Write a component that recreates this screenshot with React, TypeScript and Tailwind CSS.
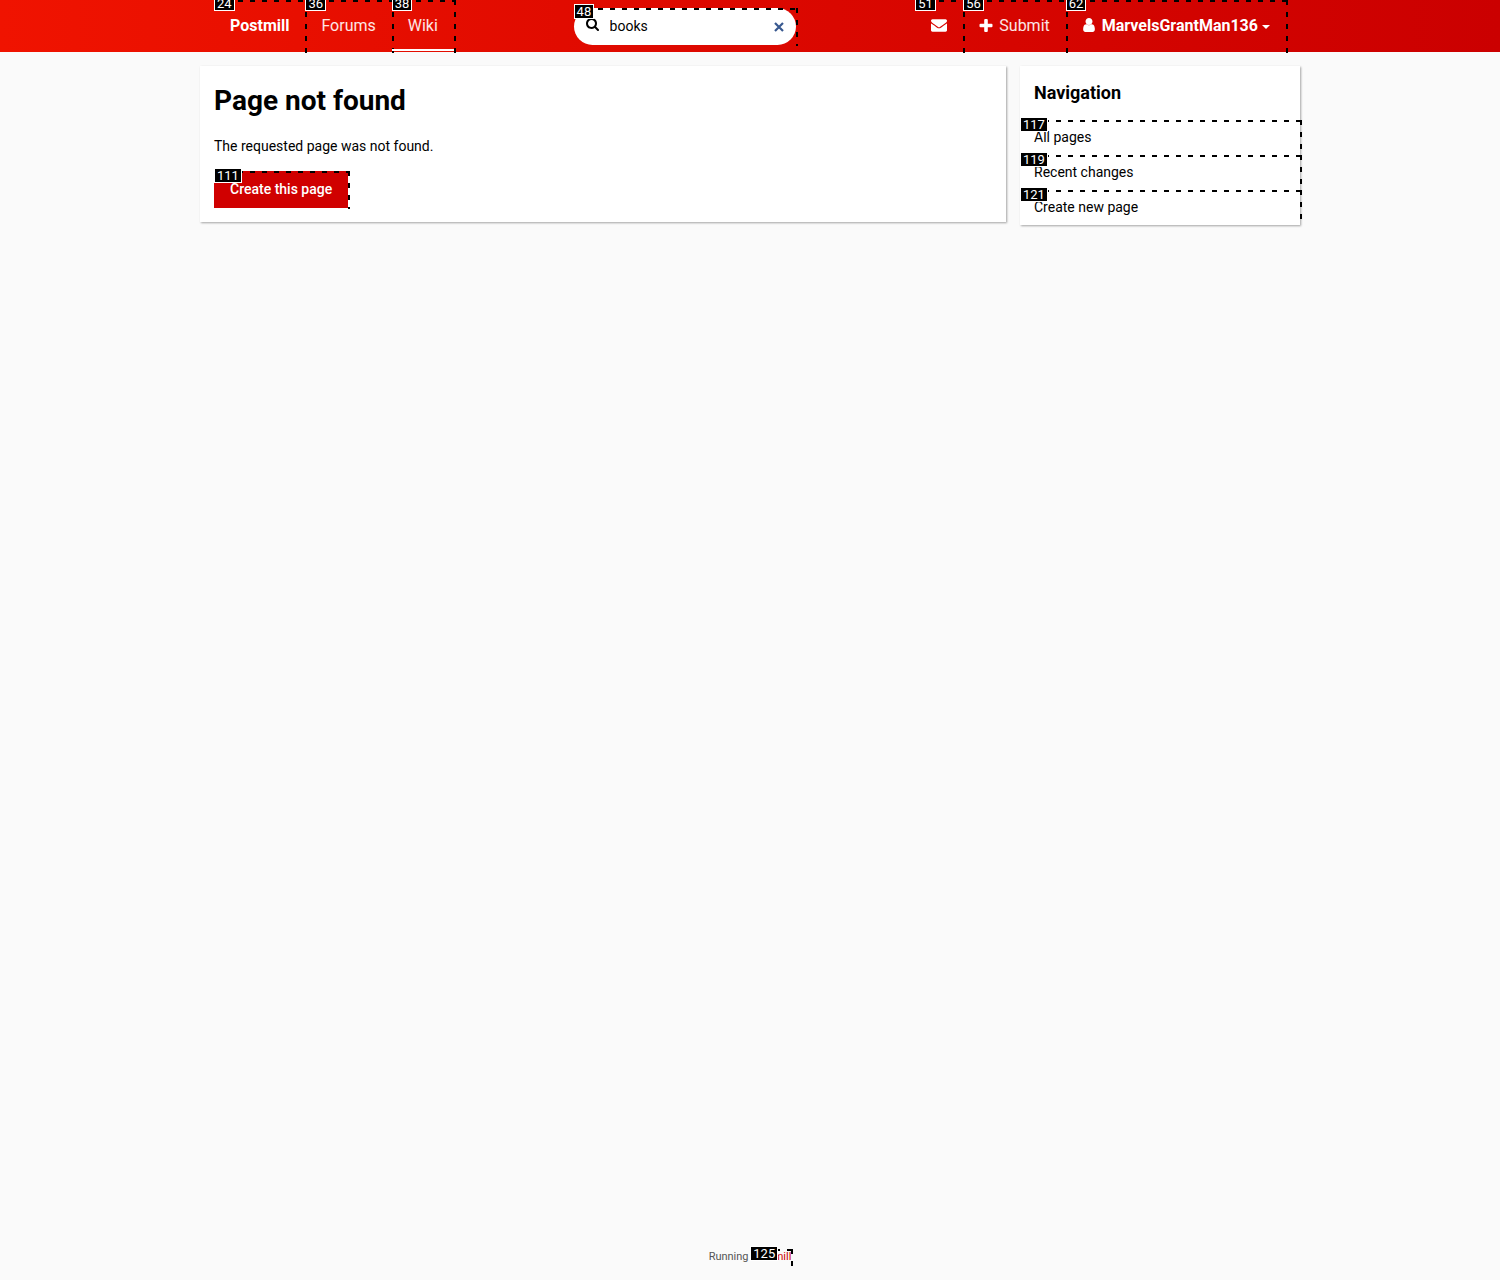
import React, { useState } from "react";

const rowDash = "bg-[repeating-linear-gradient(to_right,#000_0_5px,transparent_5px_12px)]";
const colDash = "bg-[repeating-linear-gradient(to_bottom,#000_0_5px,transparent_5px_12px)]";

function Mark({ n, tag }: { n: string; tag: string }) {
  return (
    <span aria-hidden="true" className="pointer-events-none absolute inset-0">
      <span className={`absolute left-0 -right-0.5 top-0 h-0.5 ${rowDash}`} />
      <span className={`absolute -right-0.5 top-0 -bottom-px w-0.5 ${colDash}`} />
      <span className={`absolute bg-black px-0.5 text-[13px]/[13px] font-normal text-white outline outline-1 outline-white ${tag}`}>{n}</span>
    </span>
  );
}

function HeaderLink({ n, className = "", children, label }: { n: string; className?: string; children: React.ReactNode; label?: string }) {
  return (
    <a href="#" aria-label={label} className={`relative flex h-[52px] items-center px-4 text-base ${className}`}>
      {children}
      <Mark n={n} tag="left-px -top-[3px]" />
    </a>
  );
}

const navItems = [
  { n: "117", label: "All pages" },
  { n: "119", label: "Recent changes" },
  { n: "121", label: "Create new page" },
];

export default function App() {
  const [query, setQuery] = useState("books");
  return (
    <div className="flex min-h-screen flex-col bg-[#fafafa] font-['Roboto',sans-serif] text-sm text-black">
      <header className="bg-linear-to-r from-[#f01300] via-[#dc0800] to-[#cb0000] text-white">
        <div className="mx-auto flex max-w-[1072px] items-center justify-between">
          <nav className="flex">
            <HeaderLink n="24" className="font-bold">Postmill</HeaderLink>
            <HeaderLink n="36" className="text-white/90">Forums</HeaderLink>
            <HeaderLink n="38" className="text-white/90 after:absolute after:inset-x-0 after:bottom-px after:h-0.5 after:bg-white">Wiki</HeaderLink>
          </nav>
          <form role="search" className="relative mt-px flex h-[37px] w-[222px] items-center rounded-full bg-white px-3 text-black" onSubmit={(e) => e.preventDefault()}>
            <svg viewBox="0 0 1664 1664" className="mb-1 size-[13px] shrink-0" fill="currentColor" aria-hidden="true">
              <path d="M1152 704q0-185-131.500-316.500T704 256 387.500 387.500 256 704t131.500 316.500T704 1152t316.500-131.500T1152 704zm512 832q0 52-38 90t-90 38q-54 0-90-38l-343-342q-179 124-399 124-143 0-273.500-55.500t-225-150-150-225T0 704t55.500-273.500 150-225 225-150T704 0t273.500 55.500 225 150 150 225T1408 704q0 220-124 399l343 343q37 37 37 90z" />
            </svg>
            <input type="search" aria-label="Search" value={query} onChange={(e) => setQuery(e.target.value)} className="ml-[11px] w-full min-w-0 bg-transparent pb-0.5 text-sm outline-none [&::-webkit-search-cancel-button]:hidden" />
            <button type="button" aria-label="Clear search" onClick={() => setQuery("")} className="shrink-0 text-[#38588f]">
              <svg viewBox="0 0 10 10" className="size-2.5" stroke="currentColor" strokeWidth="2.200" aria-hidden="true"><path d="M1 1l8 8M9 1l-8 8" /></svg>
            </button>
            <Mark n="48" tag="left-px -top-[3px]" />
          </form>
          <nav className="flex justify-end">
            <HeaderLink n="51" label="Messages">
              <svg viewBox="0 0 1792 1408" className="mb-px h-[13px] w-4" fill="currentColor" aria-hidden="true">
                <path d="M1792 454v794q0 66-47 113t-113 47H160q-66 0-113-47T0 1248V454q44 49 101 87 362 246 497 345 57 42 92.500 65.500t94.500 48 110 24.500h2q51 0 110-24.500t94.500-48T1194 886q170-123 498-345 57-39 100-87zm0-294q0 79-49 151t-122 123q-376 261-468 325-10 7-42.500 30.500t-54 38-52 32.500-57.500 27-50 9h-2q-23 0-50-9t-57.500-27-52-32.500-54-38T639 759q-91-64-262-182.500T172 434q-62-42-117-115.500T0 182q0-78 41.500-130T160 0h1472q65 0 112.500 47t47.500 113z" />
              </svg>
            </HeaderLink>
            <HeaderLink n="56" className="text-white/90">
              <svg viewBox="-1 0 14 13" className="mr-1.5 mb-0.5 h-[13px] w-3.5" fill="white" aria-hidden="true"><path d="M5.200 0h1.600q1 0 1 1v3.700H11.500q1 0 1 1v1.600q0 1-1 1H7.800V12q0 1-1 1H5.200q-1 0-1-1V8.300H.5q-1 0-1-1V5.700q0-1 1-1h3.700V1q0-1 1-1z" /></svg>
              Submit
            </HeaderLink>
            <HeaderLink n="62" className="font-bold">
              <svg viewBox="0 0 1280 1536" className="mr-1.5 mb-0.5 h-3.5 w-3.5" fill="currentColor" aria-hidden="true">
                <path d="M1280 1271q0 120-69 192.500t-168 72.500H237q-99 0-168-72.500T0 1271q0-94 9.500-174T45 941t67.500-132T223 718t159-35q112 109 258 109t258-109q93 0 159 35t110.500 91 67.500 132 35.500 156 9.500 174zM1024 384q0 159-112.500 271.500T640 768 368.500 655.500 256 384t112.500-271.500T640 0t271.500 112.500T1024 384z" />
              </svg>
              MarvelsGrantMan136
              <svg viewBox="0 0 8 4" className="mt-0.5 ml-1 h-1 w-2" fill="currentColor" aria-hidden="true"><path d="M0 0h8L4 4z" /></svg>
            </HeaderLink>
          </nav>
        </div>
      </header>

      <div className="mx-auto flex w-full max-w-[1100px] flex-1 items-start gap-3.5 pt-3.5">
        <main className="min-w-0 flex-1 bg-white p-3.5 shadow-[1px_1px_2px_rgba(0,0,0,0.35)]">
          <h1 className="mt-[5px] text-[28px]/8 font-bold">Page not found</h1>
          <p className="mt-[19px] text-sm">The requested page was not found.</p>
          <a href="#" className="relative mt-[15px] inline-flex h-[37px] items-center bg-[#d00000] px-4 pb-0.5 align-top text-sm font-medium text-white">
            Create this page
            <Mark n="111" tag="left-px -top-0.5" />
          </a>
        </main>
        <aside className="w-[280px] shrink-0 bg-white shadow-[1px_1px_2px_rgba(0,0,0,0.35)]">
          <h2 className="px-3.5 py-[15px] text-lg/6 font-bold">Navigation</h2>
          <ul>
            {navItems.map((item) => (
              <li key={item.n}>
                <a href="#" className="relative flex h-[35px] items-center px-3.5 pb-0.5">
                  {item.label}
                  <Mark n={item.n} tag="left-px -top-0.5" />
                </a>
              </li>
            ))}
          </ul>
        </aside>
      </div>

      <footer className="pb-[15px] text-center text-[11px]/4 text-[#555]">
        Running{" "}
        <a href="#" className="relative inline-block text-[#c00]">
          Postmill
          <Mark n="125" tag="left-0 -top-0.5" />
        </a>
      </footer>
    </div>
  );
}
